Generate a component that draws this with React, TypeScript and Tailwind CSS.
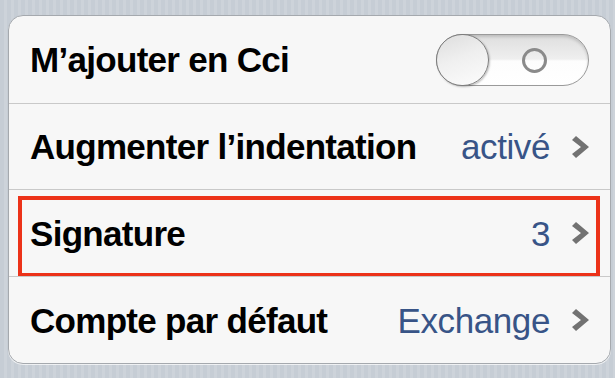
import React from "react";

const Chevron = () => (
  <svg width={17} height={22} viewBox="0 0 17 22" className="w-[17px] h-[22px] shrink-0 block">
    <polygon points="0,4 4,0 17,11 4,22 0,18 9,11" fill="#727272" />
  </svg>
);

const Toggle = () => (
  <div className="relative w-[153px] h-[52px] rounded-full border border-[#9a9a9a] bg-[linear-gradient(180deg,#dedede_0%,#efefef_48%,#fdfdfd_52%,#ffffff_100%)] shadow-[inset_0_2px_3px_rgba(0,0,0,0.15)]">
    {/* off indicator ring */}
    <div className="absolute left-[85px] top-[13px] w-[25px] h-[25px] rounded-full border-[3.5px] border-[#8a8a8a]" />
    {/* knob */}
    <div className="absolute left-[-1px] top-[-1px] w-[53px] h-[52px] rounded-full border border-[#7d7d7d] bg-[linear-gradient(160deg,#dddddd_0%,#efefef_45%,#fcfcfc_100%)] shadow-[1px_1px_2px_rgba(0,0,0,0.25)]" />
  </div>
);

const rows = [
  { label: "M’ajouter en Cci", toggle: true, h: "h-[87px]" },
  { label: "Augmenter l’indentation", value: "activé", h: "h-[86px]" },
  { label: "Signature", value: "3", h: "h-[87px]", marked: true },
  { label: "Compte par défaut", value: "Exchange", h: "h-[87px]" },
];

export default function App() {
  return (
    <div
      className="w-[615px] h-[378px] overflow-hidden pt-[15px] pl-[8px] bg-[repeating-linear-gradient(90deg,#c6cdd5_0px,#c6cdd5_4px,#cdd3da_4px,#cdd3da_7px)]"
      style={{ fontFamily: '"Liberation Sans", Arial, sans-serif' }}
    >
      <div className="w-[603px] rounded-[15px] border border-[#a5a9ae] bg-[#f7f7f7] shadow-[0_1px_0_rgba(255,255,255,0.7)]">
        {rows.map((row, i) => (
          <div
            key={row.label}
            className={`relative flex items-center justify-between pl-[21px] pr-[21px] ${row.h} ${i > 0 ? "border-t border-[#c9c9c9]" : ""}`}
          >
            <span className="text-[35px] font-bold tracking-[-0.7px] text-black leading-none">{row.label}</span>
            {row.toggle ? (
              <Toggle />
            ) : (
              <div className="flex items-center gap-[22px]">
                <span className="text-[35px] tracking-[-0.4px] text-[#385487] leading-none">{row.value}</span>
                <Chevron />
              </div>
            )}
            {row.marked && (
              <div className="absolute left-[9px] right-[10px] top-[6px] bottom-[-1px] border-4 border-[#ec3219]" />
            )}
          </div>
        ))}
      </div>
    </div>
  );
}
